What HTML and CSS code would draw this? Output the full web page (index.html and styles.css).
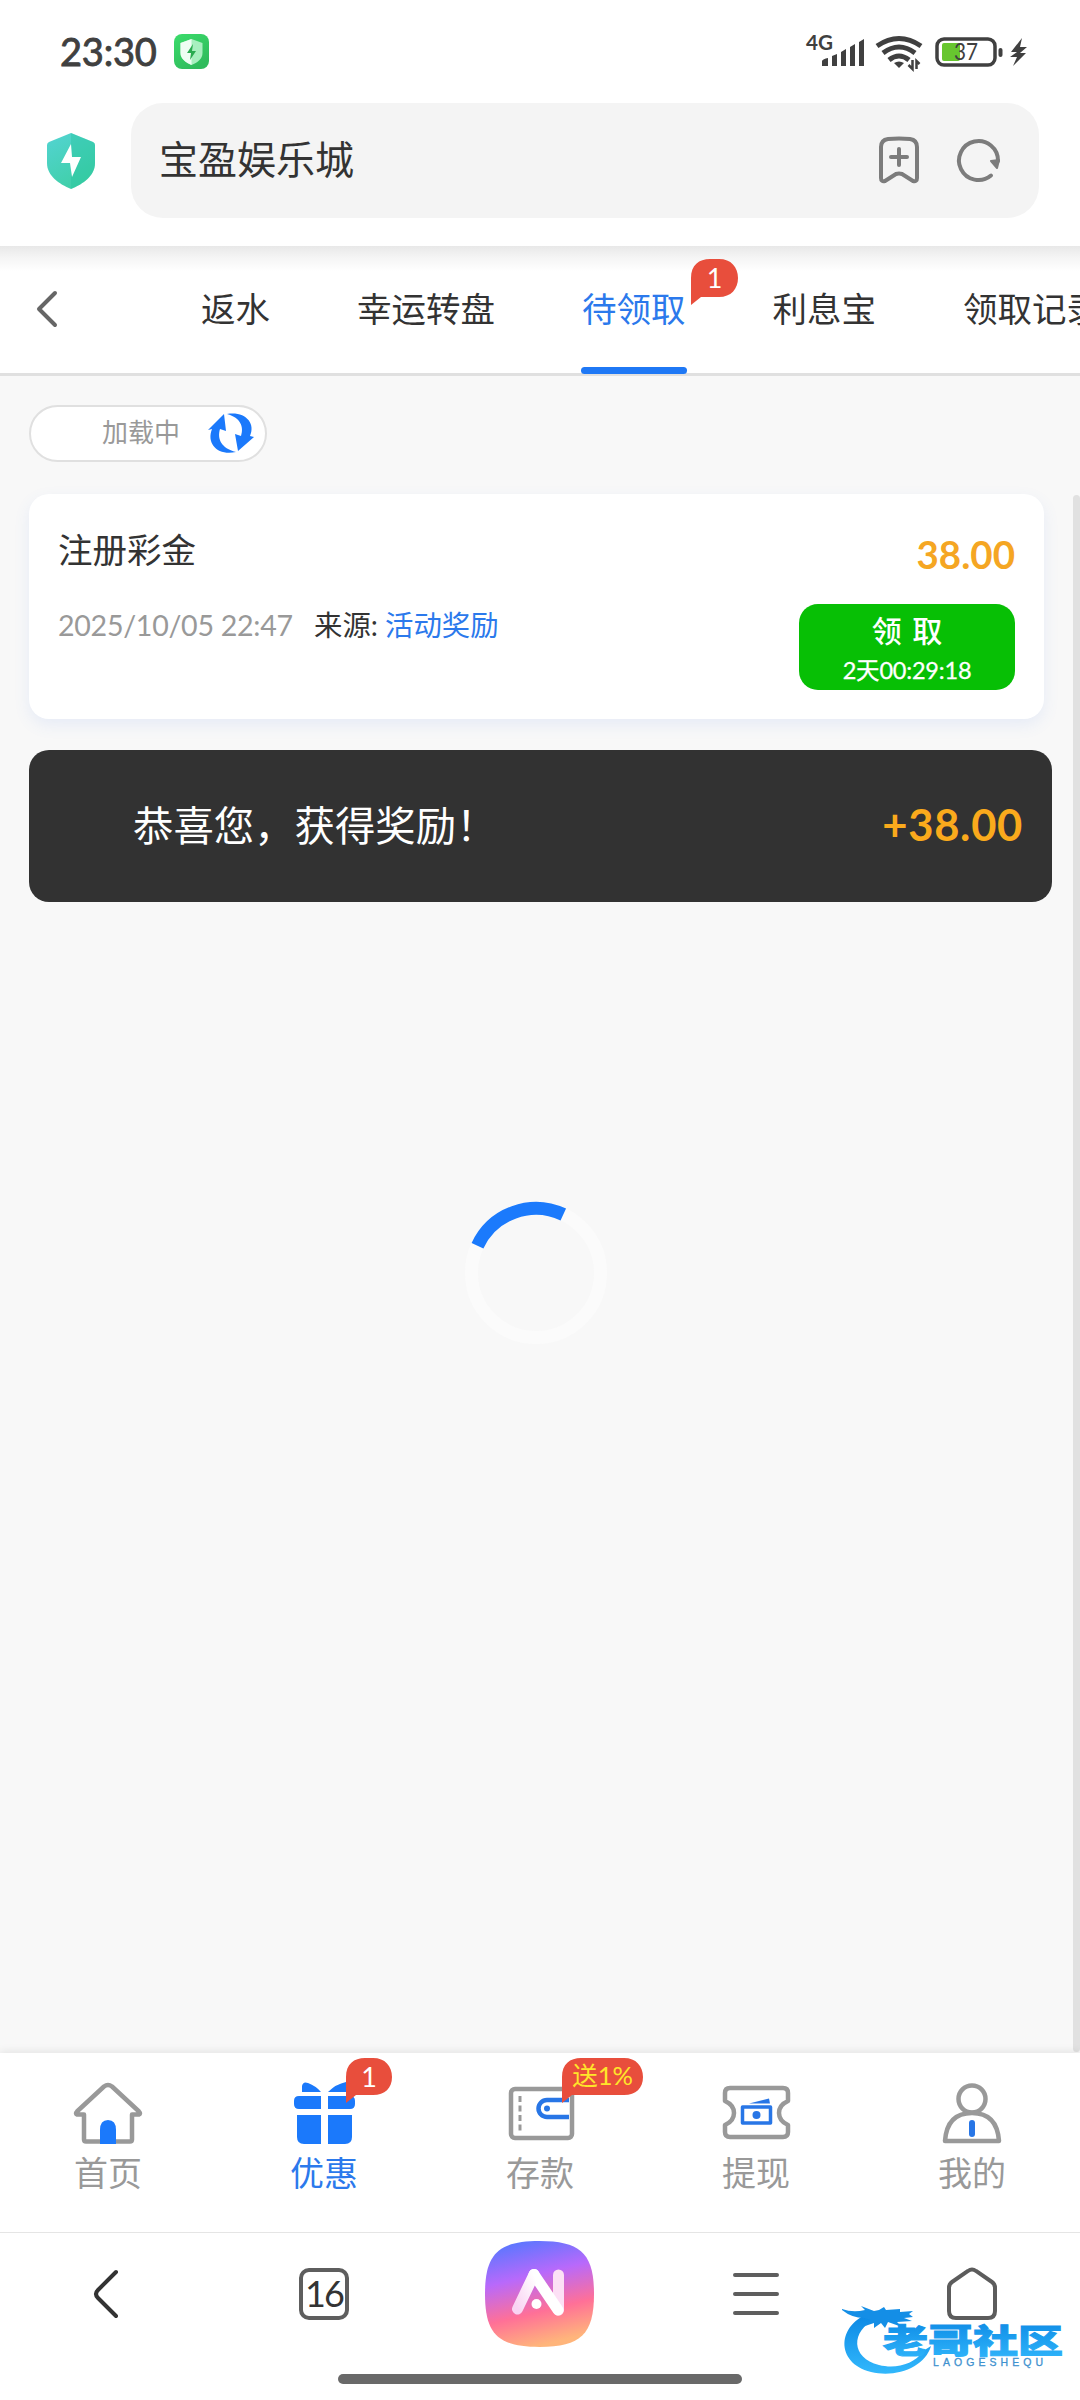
FILE: index.html
```html
<!DOCTYPE html>
<html lang="zh-CN">
<head>
<meta charset="utf-8">
<title>宝盈娱乐城</title>
<link rel="stylesheet" href="styles.css">
</head>
<body>
<div class="phone">
  <header class="browser-top">
    <div class="status">
      <span class="clock">23:30</span>
      <svg class="guard" viewBox="0 0 36 36"><defs><linearGradient id="gg" x1="0" y1="0" x2="0.6" y2="1"><stop offset="0" stop-color="#3bdc6b"/><stop offset="1" stop-color="#2fbb5c"/></linearGradient></defs><rect width="35" height="35" rx="8" fill="url(#gg)"/><path d="M17.500 5 28.500 9v10c0 6-5 9.500-11 12C12 28.500 6.500 25 6.500 19V9Z" fill="#a8efbf"/><path d="M17.500 5v26C12 28.500 6.500 25 6.500 19V9Z" fill="#effdf3"/><path d="m19 10-6 9h4l-1 7 6-9h-4Z" fill="#2aab50"/></svg>
      <svg class="signals" viewBox="806 30 224 42">
        <text class="net" x="806" y="49" textLength="27" lengthAdjust="spacingAndGlyphs">4G</text>
        <g fill="#404040"><path d="M822 60q1-2 6-3v8h-6zM832 55l5-2v12h-5zM841 51l5-3v17h-5zM850 46l5-3v22h-5zM859 41l5-3v27h-5z"/></g>
        <g fill="none" stroke="#404040" stroke-width="5"><path d="M877 45q22-15 44 0"/><path d="M883 52q16-12 32 0"/><path d="M889 59q10-8 20 0"/></g>
        <path d="M894 62q5-3 10 0l-5 5Z" fill="#404040"/>
        <path d="M912.500 59v9l-4-4M916.500 68v-8l3 3" fill="none" stroke="#404040" stroke-width="2.500"/>
        <rect x="937" y="38" width="58" height="26" rx="7" fill="none" stroke="#404040" stroke-width="3.500"/>
        <rect x="942" y="42" width="18" height="18" rx="2" fill="#67c62f"/>
        <text class="battery" x="954" y="59" textLength="24" lengthAdjust="spacingAndGlyphs">37</text>
        <rect x="998.500" y="47" width="4" height="9" rx="2" fill="#404040"/>
        <path d="m1022 37-11 14h6l-7 5h7l-4 9 13-13h-6l7-6h-7Z" fill="#404040"/>
      </svg>
    </div>
    <div class="address-row">
      <svg class="shield" viewBox="0 0 50 58"><defs><linearGradient id="sg" x1="0" y1="0" x2="0.5" y2="1"><stop offset="0" stop-color="#53d4d3"/><stop offset="1" stop-color="#40cfa8"/></linearGradient></defs><path d="M25 1 47 10q2 1 2 3v18c0 13-12 21-24 26C13 52 1 44 1 31V13q0-2 2-3Z" fill="url(#sg)"/><path d="M25 1 47 10q2 1 2 3v18c0 13-12 21-24 26Z" fill="#22c49c" opacity=".35"/><path d="M25 12 15 31h9l2 14 9-20h-9Z" fill="#fff"/></svg>
      <div class="address">
        <span class="site-name">宝盈娱乐城</span>
        <svg class="address-tools" viewBox="876 134 130 52" fill="none" stroke="#7c7c7c" stroke-width="4" stroke-linecap="round" stroke-linejoin="round"><path d="M880 146q0-7 7-8 11-1 22 0 7 1 7 8v31q0 4-4 3l-11-7q-3-1-6 0l-11 7q-4 1-4-3ZM890 156h16M898 148v16"/><path d="M990 174.500a19.500 19.500 0 1 1 7-14.500"/><path d="m990 160 6 7 2-8Z" fill="#7c7c7c" stroke-width="2"/></svg>
      </div>
    </div>
  </header>

  <nav class="tabs">
    <svg class="tab-back" viewBox="0 0 24 38"><path d="M20 3 4 19l16 16" fill="none" stroke="#666" stroke-width="4" stroke-linecap="round" stroke-linejoin="round"/></svg>
    <span class="tab">返水</span>
    <span class="tab">幸运转盘</span>
    <span class="tab active">待领取<b class="bubble tab-bubble"><svg viewBox="0 0 47 46"><path d="M0 46V19C0 6 8 0 19 0h9c12 0 19 8 19 19s-7 19-19 19H10Z"/></svg><i>1</i></b></span>
    <span class="tab">利息宝</span>
    <span class="tab">领取记录</span>
  </nav>

  <main class="content">
    <div class="refresh"><span>加载中</span>
      <svg class="refresh-icon" viewBox="209 413 46 41" fill="#1b79fb"><path d="M209 430l16-16 2 17-6-2c-3 10 1 19 16 23-18 4-30-8-24-23Z"/><path d="M228 414c18-3 29 9 23 22l4 1-16 14-3-17 6 2c3-9 0-18-14-22Z"/></svg>
    </div>
    <section class="card">
      <div class="card-left">
        <h2>注册彩金</h2>
        <p><span class="date">2025/10/05 22:47</span><span class="source">来源: </span><a>活动奖励</a></p>
      </div>
      <div class="card-right">
        <strong class="amount">38.00</strong>
        <button class="claim"><span class="claim-label">领 取</span><span class="claim-time">2天00:29:18</span></button>
      </div>
    </section>
    <section class="toast"><span>恭喜您，获得奖励！</span><strong>+38.00</strong></section>
    <svg class="spinner" viewBox="0 0 142 142" fill="none" stroke-width="13"><circle cx="71" cy="71" r="64.500" stroke="#fbfbfb"/><path d="M12.500 43.700A64.500 64.500 0 0 1 98.300 12.500" stroke="#1b7afc"/></svg>
    <div class="scrollbar"></div>
  </main>

  <nav class="site-nav">
    <div class="item">
      <svg class="icon" viewBox="72 2080 72 66" fill="none" stroke="#999" stroke-width="4.500" stroke-linejoin="round"><path d="M84 2114.500h-7q-2-1 0-3l27-25q4-3 8 0l27 25q2 2 0 3h-7v25q0 2-2 2H86q-2 0-2-2Z"/><path d="M100 2144v-14q0-10 8-10t8 10v14Z" fill="#1b79fb" stroke="none"/></svg>
      <span>首页</span>
    </div>
    <div class="item on">
      <svg class="icon" viewBox="288 2080 72 66" fill="#1b79fb"><path d="M302 2092v-6q1-5 6-3 8 3 13 9ZM328 2092q8-8 18-10v10ZM299 2096h22v13h-22q-5 0-5-5v-3q0-5 5-5ZM328 2096h22q5 0 5 5v3q0 5-5 5h-22ZM297 2115h24v29h-17q-7 0-7-7ZM328 2115h24v22q0 7-7 7h-17Z"/></svg>
      <span>优惠</span>
      <b class="bubble promo-bubble"><svg viewBox="0 0 46 45"><path d="M0 45V19C0 6 8 0 19 0h8c12 0 19 8 19 19s-7 18-19 18H10Z"/></svg><i>1</i></b>
    </div>
    <div class="item">
      <svg class="icon" viewBox="504 2080 72 66" fill="none" stroke="#999" stroke-width="4.500"><rect x="511" y="2089" width="61" height="49" rx="4"/><path d="M520 2096v36" stroke-width="3" stroke-dasharray="6 3.500"/><path d="M569 2100h-22a8.500 8.500 0 0 0 0 17h22" stroke="#2876e6"/><circle cx="547" cy="2108.500" r="3" fill="#2876e6" stroke="none"/></svg>
      <span>存款</span>
      <b class="bubble pay-bubble"><svg viewBox="0 0 81 45"><path d="M0 45V19C0 6 8 0 19 0h43c12 0 19 8 19 19s-7 18-19 18H10Z"/></svg><i>送1%</i></b>
    </div>
    <div class="item">
      <svg class="icon" viewBox="720 2080 72 66" fill="none" stroke="#999" stroke-width="4.500" stroke-linejoin="round"><path d="M730 2088h53q5 0 5 5v8q-9 4-9 12t9 12v7q0 5-5 5h-53q-5 0-5-5v-7q9-4 9-12t-9-12v-8q0-5 5-5Z"/><path d="M742.500 2107h28v16h-28Z" stroke="#2876e6" stroke-width="3.500" /><circle cx="756.500" cy="2115" r="4" fill="#2876e6" stroke="none"/><path d="m749 2103.500 20-5 1 5Z" fill="#2876e6" stroke="none"/></svg>
      <span>提现</span>
    </div>
    <div class="item">
      <svg class="icon" viewBox="936 2080 72 66" fill="none" stroke="#999" stroke-width="4.500" stroke-linejoin="round"><circle cx="972" cy="2099" r="13.500"/><path d="M945 2141q2-28 27-28t27 28Z"/><path d="M972 2123v11" stroke="#2876e6" stroke-width="6" stroke-linecap="round"/></svg>
      <span>我的</span>
    </div>
  </nav>

  <footer class="browser-nav">
    <div class="tool"><svg class="chevron" viewBox="0 0 24 48"><path d="M22 2 4 20q-4 4 0 8l18 18" fill="none" stroke="#333" stroke-width="4" stroke-linecap="round"/></svg></div>
    <div class="tool"><span class="pages">16</span></div>
    <div class="tool">
      <svg class="ai" viewBox="0 0 109 106"><defs><linearGradient id="ai" x1=".2" y1="0" x2=".45" y2="1"><stop offset="0" stop-color="#5478ff"/><stop offset=".36" stop-color="#b869fb"/><stop offset=".7" stop-color="#ff7097"/><stop offset="1" stop-color="#ffb57b"/></linearGradient><linearGradient id="leg" x1="1" y1="0" x2="0" y2="1"><stop offset="0" stop-color="#fff"/><stop offset="1" stop-color="#f9d3f3"/></linearGradient></defs><path d="M54.500 0C96 0 109 13 109 53s-13 53-54.500 53S0 93 0 53 13 0 54.500 0Z" fill="url(#ai)"/><path d="M73.500 34v35" stroke="#fce0f5" stroke-width="11" stroke-linecap="round"/><path d="M49 33.500 73 69" stroke="#fff" stroke-width="11" stroke-linecap="round"/><path d="M32.500 68 49 33.500" stroke="url(#leg)" stroke-width="11" stroke-linecap="round"/><circle cx="51.500" cy="63" r="5" fill="#fff"/></svg>
    </div>
    <div class="tool"><svg class="menu" viewBox="0 0 46 42"><path d="M2 2h42M2 21h42M2 40h42" stroke="#5e5e5e" stroke-width="4" stroke-linecap="round"/></svg></div>
    <div class="tool"><svg class="house" viewBox="0 0 50 52"><path d="M21 3q4-3 8 0l16 11q3 2 3 6v23q0 7-7 7H9q-7 0-7-7V20q0-4 3-6Z" fill="none" stroke="#5c5c5c" stroke-width="4"/></svg></div>
    <div class="indicator"></div>
    <svg class="watermark" viewBox="840 2300 226 76"><defs><linearGradient id="wm" x1="0" y1="0" x2="0" y2="1"><stop offset="0" stop-color="#0a86e3"/><stop offset="1" stop-color="#32b8fc"/></linearGradient></defs>
      <path d="M872 2312c-36 12-37 51-1 60 26 6 54-5 60-26l-8 5c-9 14-28 18-44 14-28-7-29-34-3-46l12-6Z" fill="url(#wm)"/>
      <path d="M842 2309q11 4 23 1l-4-4 13 5 5-1 5-3 2 3 14-1v3l13-1-4 3 4 3-9 1 8 3-15 1 5 5-14-5-3 6-4-5-7 5 0-5-9 3 6-6-7-2q-12 0-22-8Z" fill="#148ee6"/>
      <text class="wm-name" x="883" y="2353" textLength="180" lengthAdjust="spacingAndGlyphs">老哥社区</text>
      <text class="wm-latin" x="933" y="2366" textLength="110">LAOGESHEQU</text>
    </svg>
  </footer>
</div>
</body>
</html>
```
FILE: styles.css
```css
* { box-sizing: border-box; }
body { margin: 0; background: #fff; font-family: Lato, "Noto Sans CJK SC", sans-serif; color: #333; }
svg { display: block; flex: none; overflow: visible; }
.phone { width: 1080px; height: 2400px; overflow: hidden; display: flex; flex-direction: column; white-space: nowrap; }

.browser-top { height: 246px; }
.status { height: 103px; padding: 0 50px 0 60px; display: flex; align-items: center; }
.clock { width: 114px; font-size: 38px; font-weight: 400; color: #404040; line-height: 103px; -webkit-text-stroke: .9px #404040; letter-spacing: -.2px; }
.guard { width: 36px; height: 36px; }
.signals { width: 224px; height: 42px; margin-left: auto; }
.net { font: 700 20px Lato, sans-serif; fill: #404040; }
.battery { font: 400 24px Lato, sans-serif; fill: #404040; }
.address-row { display: flex; align-items: center; padding: 0 41px 0 46px; }
.shield { width: 50px; height: 58px; margin-right: 35px; }
.address { flex: 1; height: 115px; border-radius: 32px; background: #f4f4f4; padding: 0 32px 0 28px; display: flex; align-items: center; justify-content: space-between; font-size: 39px; }
.site-name { padding-bottom: 7px; }
.address-tools { width: 130px; height: 52px; }

.tabs { height: 130px; flex: none; border-bottom: 3px solid #e0e0e0; background: linear-gradient(#e8e8e8, #f5f5f5 12px, #fff 25px); display: flex; gap: 87px; padding-left: 35px; line-height: 125px; font-size: 34.500px; }
.tab-back { width: 24px; height: 38px; margin: 44px 55px 0 0; }
.tab { flex: none; position: relative; height: 128px; }
.active { color: #2b79ec; }
.active::after { content: ""; position: absolute; left: -1px; right: -1px; bottom: 0; height: 7px; border-radius: 4px; background: #1f78f5; }
.bubble { position: absolute; color: #fff; font-weight: 400; text-align: center; }
.bubble svg { position: absolute; inset: 0; width: 100%; height: 100%; fill: #e84e3c; }
.bubble i { position: relative; display: block; font-style: normal; font-size: 27px; line-height: 37px; }
.tab-bubble { left: 109px; top: 13px; width: 47px; height: 46px; }

.content { position: relative; height: 1677px; background: #f8f8f8; padding: 29px 28px 0 29px; }
.refresh { width: 238px; height: 57px; border: 2px solid #e0e0e0; border-radius: 29px; background: #fff; padding: 0 11px 0 71px; display: flex; align-items: center; justify-content: space-between; font-size: 26px; color: #999; line-height: 50px; }
.refresh span { padding-bottom: 3px; }
.refresh-icon { width: 46px; height: 41px; }
.card { width: 1015px; height: 225px; margin-top: 32px; padding: 0 29px; background: #fff; border-radius: 20px; box-shadow: 0 6px 16px rgba(80, 130, 240, .1); display: flex; justify-content: space-between; }
.card h2 { margin: 31px 0 0; font-size: 34.500px; line-height: 50px; font-weight: 400; }
.card p { margin: 29px 0 0; display: flex; font-size: 28.400px; line-height: 42px; }
.date { width: 256px; color: #999; font-size: 28.600px; letter-spacing: -.28px; }
.source { width: 71px; }
.card a { color: #2b79ec; }
.card-right { display: flex; flex-direction: column; align-items: flex-end; }
.amount { margin-top: 34px; height: 76px; font-size: 38.500px; line-height: 52px; color: #f5a623; }
.claim { width: 216px; height: 86px; border: 0; border-radius: 19px; padding: 4px 0 0; background: #07bf05; color: #fff; font-family: inherit; display: flex; flex-direction: column; align-items: center; }
.claim-label { font-size: 30px; line-height: 44px; word-spacing: 3px; font-weight: 500; }
.claim-time { font-size: 23.500px; line-height: 36px; -webkit-text-stroke: .3px #fff; letter-spacing: -.2px; }
.toast { width: 1023px; height: 152px; margin-top: 31px; padding: 0 29px 4px 104px; border-radius: 20px; background: #323232; color: #fff; display: flex; align-items: center; justify-content: space-between; font-size: 40.400px; }
.toast strong { font-size: 43.500px; letter-spacing: .7px; color: #faaa1c; }
.toast span { padding-bottom: 2px; }
.spinner { width: 142px; height: 142px; margin: 300px 0 0 436px; }
.scrollbar { position: absolute; right: 0; top: 119px; width: 7px; bottom: 1px; border-radius: 4px; background: #e1e1e1; }

.site-nav { height: 179px; flex: none; display: grid; grid-template-columns: repeat(5, 1fr); box-shadow: 0 -2px 8px rgba(0, 0, 0, .08); position: relative; background: #fff; }
.item { position: relative; display: flex; flex-direction: column; align-items: center; padding-top: 27px; font-size: 34px; line-height: 50px; color: #999; }
.icon { width: 72px; height: 66px; margin-bottom: 2px; }
.on { color: #2b79ec; }
.promo-bubble { left: 130px; top: 5px; width: 46px; height: 45px; }
.pay-bubble { left: 130px; top: 5px; width: 81px; height: 45px; }
.pay-bubble i { font-size: 25.500px; color: #ffe52a; line-height: 35px; }

.browser-nav { position: relative; height: 168px; flex: none; border-top: 1px solid #e5e5e5; display: grid; grid-template-columns: repeat(5, 1fr); background: #fff; }
.tool { height: 121px; display: flex; align-items: center; justify-content: center; }
.chevron { width: 24px; height: 48px; margin-right: 4px; }
.pages { width: 50px; height: 52px; border: 4px solid #5e5e5e; border-radius: 10px; font-size: 36px; line-height: 43px; text-align: center; letter-spacing: -2px; }
.ai { width: 109px; height: 106px; margin-right: 2px; }
.menu { width: 46px; height: 42px; }
.house { width: 50px; height: 52px; }
.indicator { position: absolute; left: 338px; top: 141px; width: 404px; height: 10px; border-radius: 5px; background: #696969; }
.watermark { position: absolute; left: 840px; top: 67px; width: 226px; height: 76px; }
.wm-name { font: 900 33px "Noto Sans CJK SC", sans-serif; fill: url(#wm); stroke: url(#wm); stroke-width: 1px; }
.wm-latin { font: 400 10.500px "Liberation Sans", sans-serif; fill: #3f92cf; stroke: #3f92cf; stroke-width: .3px; }
```
